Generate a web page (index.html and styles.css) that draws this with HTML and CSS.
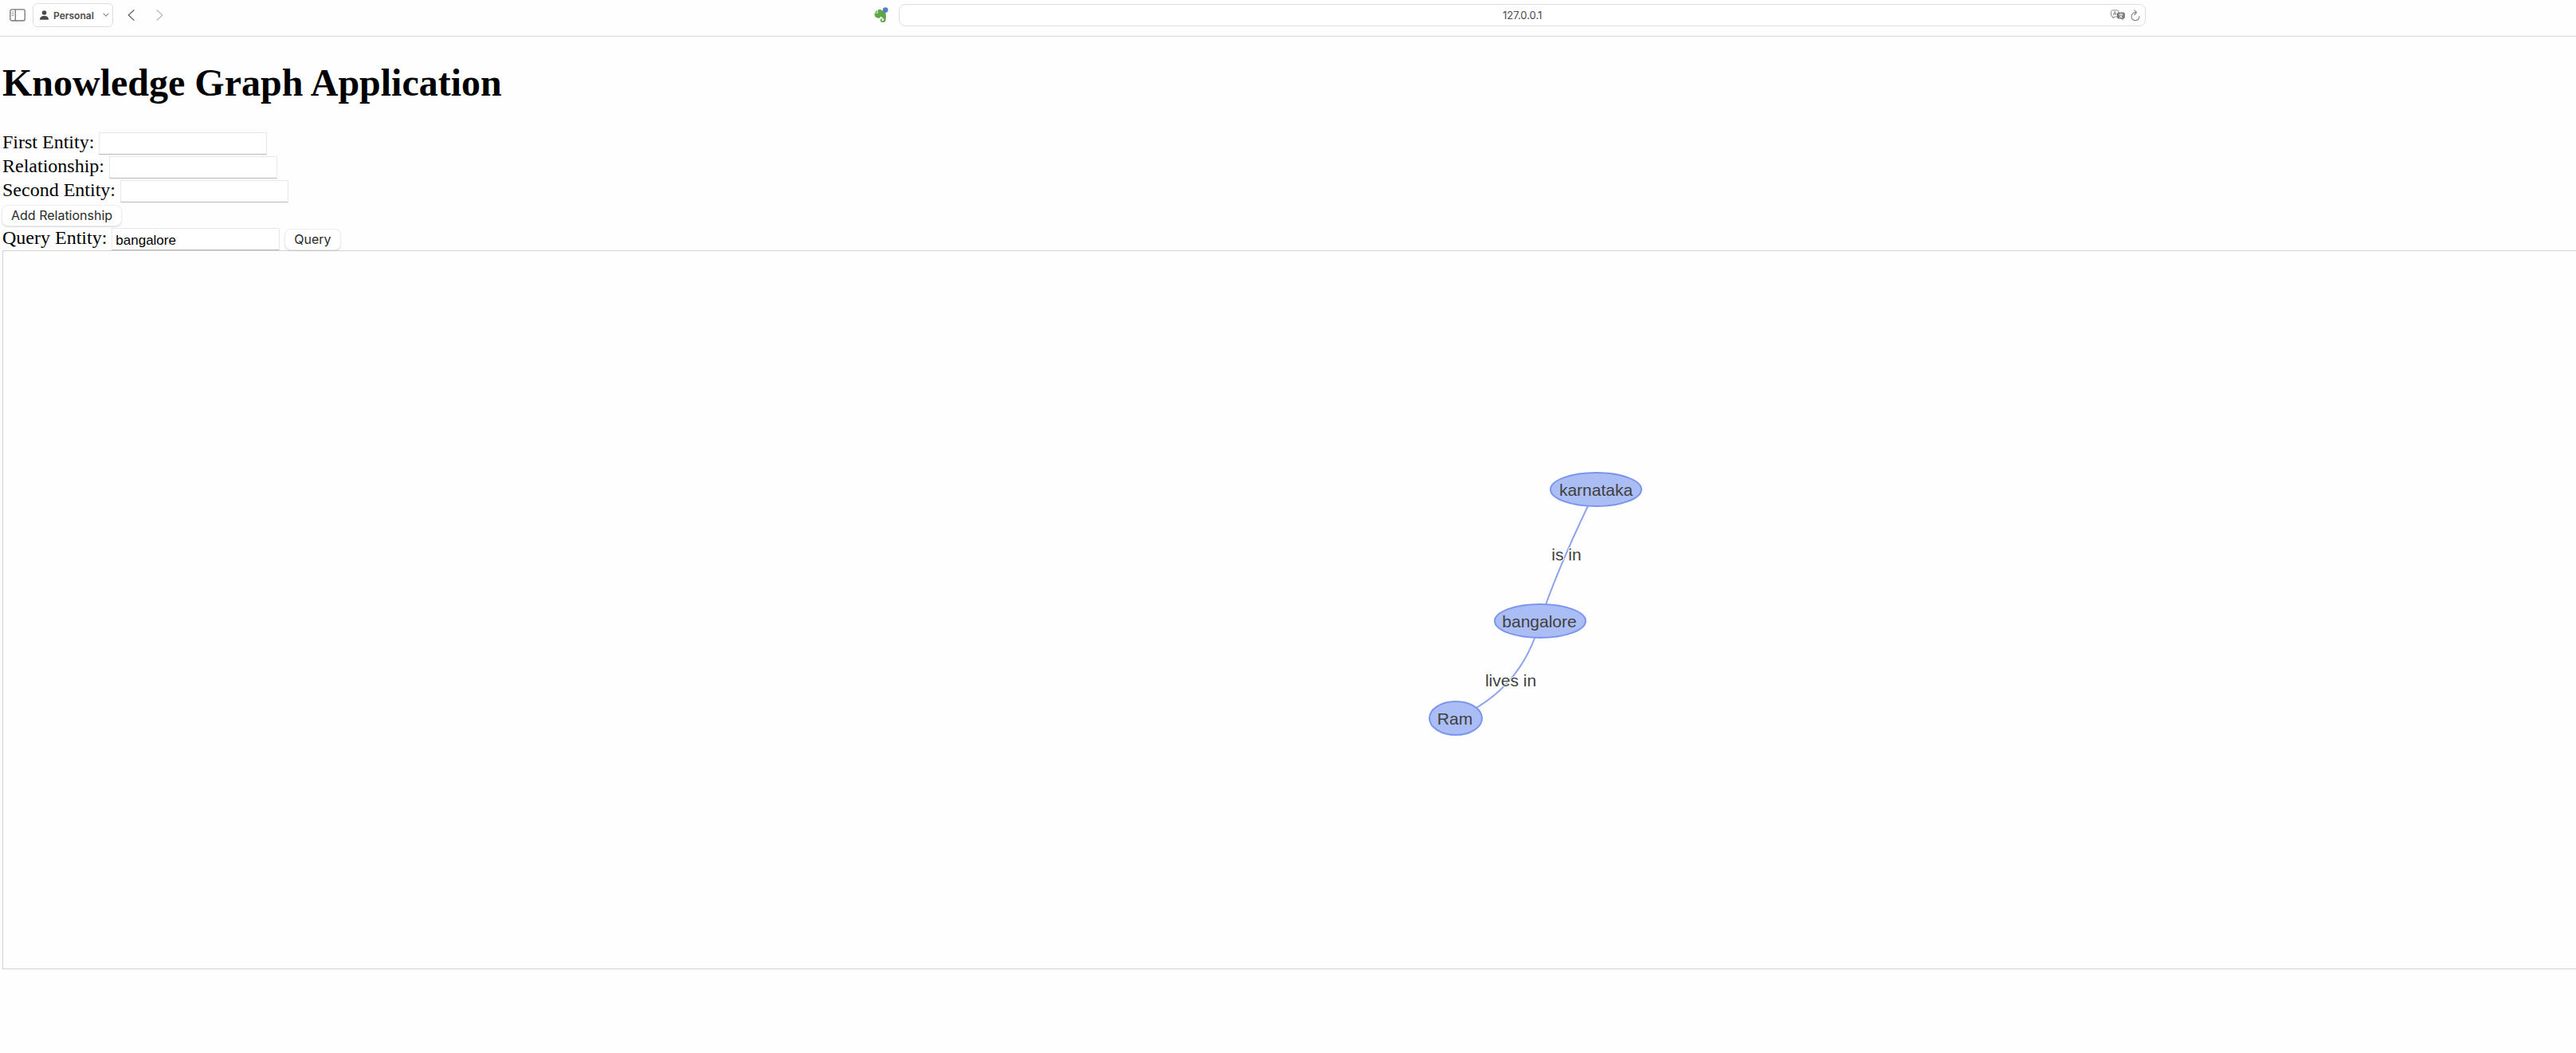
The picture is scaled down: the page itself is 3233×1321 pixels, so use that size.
FILE: index.html
```html
<!DOCTYPE html>
<html lang="en">
<head>
<meta charset="utf-8">
<title>Knowledge Graph Application</title>
<link rel="stylesheet" href="styles.css">
</head>
<body>
<header class="toolbar">
  <div class="toolbar-left">
    <button class="icon-button sidebar-button" type="button" aria-label="Show sidebar">
      <svg width="20" height="16" viewBox="0 0 20 16" fill="none" stroke="#777" stroke-width="1.3"><rect x="0.8" y="0.8" width="18.4" height="14.2" rx="2"/><path d="M7.3 1v14" /><path d="M2.6 4h2.6M2.6 6.3h2.6M2.6 8.6h2.6" stroke="#999" stroke-width="1"/></svg>
    </button>
    <button class="profile-button" type="button">
      <svg width="11" height="12" viewBox="0 0 11 12" fill="#4a4a4a"><circle cx="5.5" cy="3" r="2.8"/><path d="M0 11.2C0 8.4 2.4 6.9 5.5 6.9S11 8.4 11 11.2Q11 11.7 10.4 11.7H.6Q0 11.7 0 11.2Z"/></svg>
      <span>Personal</span>
      <svg class="chevron" width="8" height="6" viewBox="0 0 8 6" fill="none" stroke="#888" stroke-width="1.2" stroke-linecap="round" stroke-linejoin="round"><path d="M1 1.2l3 3 3-3"/></svg>
    </button>
    <button class="icon-button" type="button" aria-label="Back">
      <svg width="9" height="14" viewBox="0 0 9 14" fill="none" stroke="#666" stroke-width="1.3" stroke-linecap="round" stroke-linejoin="round"><path d="M8 .8L1.2 7 8 13.2"/></svg>
    </button>
    <button class="icon-button forward-button" type="button" aria-label="Forward">
      <svg width="9" height="14" viewBox="0 0 9 14" fill="none" stroke="#bbb" stroke-width="1.3" stroke-linecap="round" stroke-linejoin="round"><path d="M1 .8L7.8 7 1 13.2"/></svg>
    </button>
    <button class="icon-button clipper-button" type="button" aria-label="Web clipper">
      <svg width="18" height="20" viewBox="0 0 18 20"><path d="M5 3.2Q8 2 10 4.2Q14 4.2 14.6 7.5Q15.4 11.5 14.6 16.5Q14.2 19 11.5 19Q7.8 19 7.8 16.2Q7.8 14 10 13.9Q10.8 13.9 10.8 14.7L9.8 15.2Q9.4 15.6 9.6 16.4Q10.2 17.4 11.4 17.1Q12.5 16.7 12.2 14.9Q11.6 13.5 9.8 12.7L8.3 11.5Q7.8 14 6 13.8Q1.6 13.6 .8 10.5Q.2 8.5 .8 7.4H4.4Q5 7.2 5 6.4Z" fill="#60a546"/><path d="M.8 6.7L4.2 3.6V6.2Q4.2 6.7 3.7 6.7Z" fill="#60a546"/><circle cx="14.2" cy="3.5" r="3.3" fill="#527cc4"/></svg>
    </button>
  </div>
  <div class="address">
    <input class="address-input" type="text" aria-label="Address" value="127.0.0.1">
    <button class="icon-button" type="button" aria-label="Translate">
      <svg width="18" height="14" viewBox="0 0 18 14"><path d="M2.6.8h5.6q1.6 0 1.6 1.6v1M8 9H5L3 11V9q-2.4 0-2.4-1.8V2.4Q.6.8 2.6.8" fill="none" stroke="#888" stroke-width="1"/><path d="M3.2 7.2L5.3 2.2l2 5M4 5.6h2.7" fill="none" stroke="#888" stroke-width="1"/><path d="M9.8 3.4h6.2q1.8 0 1.8 1.8v4.6q0 1.6-1.8 1.6h-.5V13.4l-2.1-2H9.8Q8 11.4 8 9.8V5.2Q8 3.4 9.8 3.4Z" fill="#777"/><path d="M10.3 6h5.2M12.9 4.8V6M11.3 6.6q1 2.6 3.6 3.5M14.5 6.6q-1 2.6-3.6 3.5" fill="none" stroke="#fff" stroke-width="1"/></svg>
    </button>
    <button class="icon-button" type="button" aria-label="Reload">
      <svg width="12" height="15" viewBox="0 0 12 15" fill="none" stroke="#888" stroke-width="1.2" stroke-linecap="round" stroke-linejoin="round"><path d="M7.4 3.7H6A5 5 0 1 0 11 8.7M4.8.8l2.8 2.9-2.8 2.8"/></svg>
    </button>
  </div>
</header>
<main class="page">
  <h1 class="title">Knowledge Graph Application</h1>
  <form class="relationship-form">
    <div class="row"><label for="entity1">First Entity:</label><input class="field" type="text" id="entity1"></div>
    <div class="row"><label for="relationship">Relationship:</label><input class="field" type="text" id="relationship"></div>
    <div class="row"><label for="entity2">Second Entity:</label><input class="field" type="text" id="entity2"></div>
    <div class="row"><button class="push-button" type="button">Add Relationship</button></div>
  </form>
  <form class="query-form">
    <div class="row"><label for="query">Query Entity:</label><input class="field" type="text" id="query" value="bangalore"><button class="push-button" type="button">Query</button></div>
  </form>
  <section class="network" aria-label="Graph">
    <svg class="network-canvas">
      <g class="edges">
        <path d="M1999 299Q1950 399 1929 464"/>
        <path d="M1929 464Q1906 551 1823 586"/>
      </g>
      <g class="nodes">
        <ellipse cx="1999" cy="299" rx="57" ry="21"/>
        <ellipse cx="1929" cy="464" rx="57" ry="21"/>
        <ellipse cx="1823" cy="586" rx="33" ry="21"/>
      </g>
      <g class="labels">
        <text x="1999" y="307">karnataka</text>
        <text x="1928" y="472">bangalore</text>
        <text x="1822" y="594">Ram</text>
        <text class="edge-label" x="1962" y="388">is in</text>
        <text class="edge-label" x="1892" y="546">lives in</text>
      </g>
    </svg>
  </section>
</main>
</body>
</html>
```
FILE: styles.css
```css
* { box-sizing: border-box; }

body {
  margin: 0;
  background: #fefefe;
  color: #000;
  font-family: "Liberation Serif", "Times New Roman", serif;
  font-size: 24px;
}

button, input { margin: 0; font: inherit; color: inherit; }
svg { display: block; flex: none; }

.toolbar {
  display: grid;
  grid-template-columns: 34.9% 48.4% 1fr;
  height: 46px;
  padding-top: 4px;
  border-bottom: 1px solid #d6d6d6;
  font-family: Inter, "Liberation Sans", sans-serif;
}

.toolbar-left { display: flex; align-items: center; height: 30px; padding: 0 13px 0 12px; }
.icon-button { padding: 0; border: 0; background: none; }
.sidebar-button { margin-right: 9px; }

.profile-button {
  display: flex;
  align-items: center;
  gap: 6px;
  width: 101px;
  height: 30px;
  margin-right: 18px;
  padding: 0 4px 0 8px;
  border: 1px solid #dedede;
  border-radius: 6px;
  background: #fff;
  color: #4a4a4a;
  font-size: 12px;
  font-weight: 600;
}
.chevron { margin-left: auto; }
.forward-button { margin-left: 27px; }
.clipper-button { margin-left: auto; }

.address {
  display: flex;
  align-items: center;
  gap: 7px;
  height: 28px;
  margin-top: 1px;
  padding-right: 6px;
  border: 1px solid #dedede;
  border-radius: 8px;
  background: #fff;
}
.address-input {
  flex: 1;
  min-width: 0;
  height: 26px;
  padding: 0 0 0 50px;
  border: 0;
  outline: 0;
  background: none;
  color: #4a4a4a;
  font-size: 13px;
  text-align: center;
}

.page { padding-left: 3px; }
.title { margin: 30px 0 33px; font-size: 48px; line-height: 55px; font-weight: 700; }

.row { display: flex; align-items: flex-end; height: 30px; line-height: 28px; }
.row label { align-self: flex-start; }

.field {
  width: 211px;
  height: 28px;
  margin-left: 6px;
  padding: 4px 4px 0;
  border: 1px solid #e8e8e8;
  border-bottom-color: #b8b8b8;
  border-radius: 0;
  background: #fff;
  font-family: "Liberation Sans", Arial, sans-serif;
  font-size: 17px;
}

.push-button {
  height: 25px;
  margin-bottom: 1px;
  padding: 0 11px 1px;
  border: 0;
  border-radius: 7px;
  background: #fff;
  box-shadow: 0 0 1px 1px #eee, 0 1px 2px #999;
  color: #2b2b2b;
  font-family: Inter, "Liberation Sans", sans-serif;
  font-size: 16px;
  line-height: 24px;
}
.field + .push-button { margin-left: 7px; }

.network {
  height: 902px;
  border: 1px solid #d3d3d3;
  border-right: 0;
  overflow: hidden;
}
.network-canvas { width: 100%; height: 100%; }
.edges path { fill: none; stroke: #8fa3ee; stroke-width: 2px; }
.nodes ellipse { fill: #abbdf5; stroke: #7b95ee; stroke-width: 2px; }
.labels text {
  fill: #3f3f3f;
  font-family: "Liberation Sans", Arial, sans-serif;
  font-size: 21px;
  text-anchor: middle;
}
.labels .edge-label { stroke: #fff; stroke-width: 2px; paint-order: stroke; }
```
